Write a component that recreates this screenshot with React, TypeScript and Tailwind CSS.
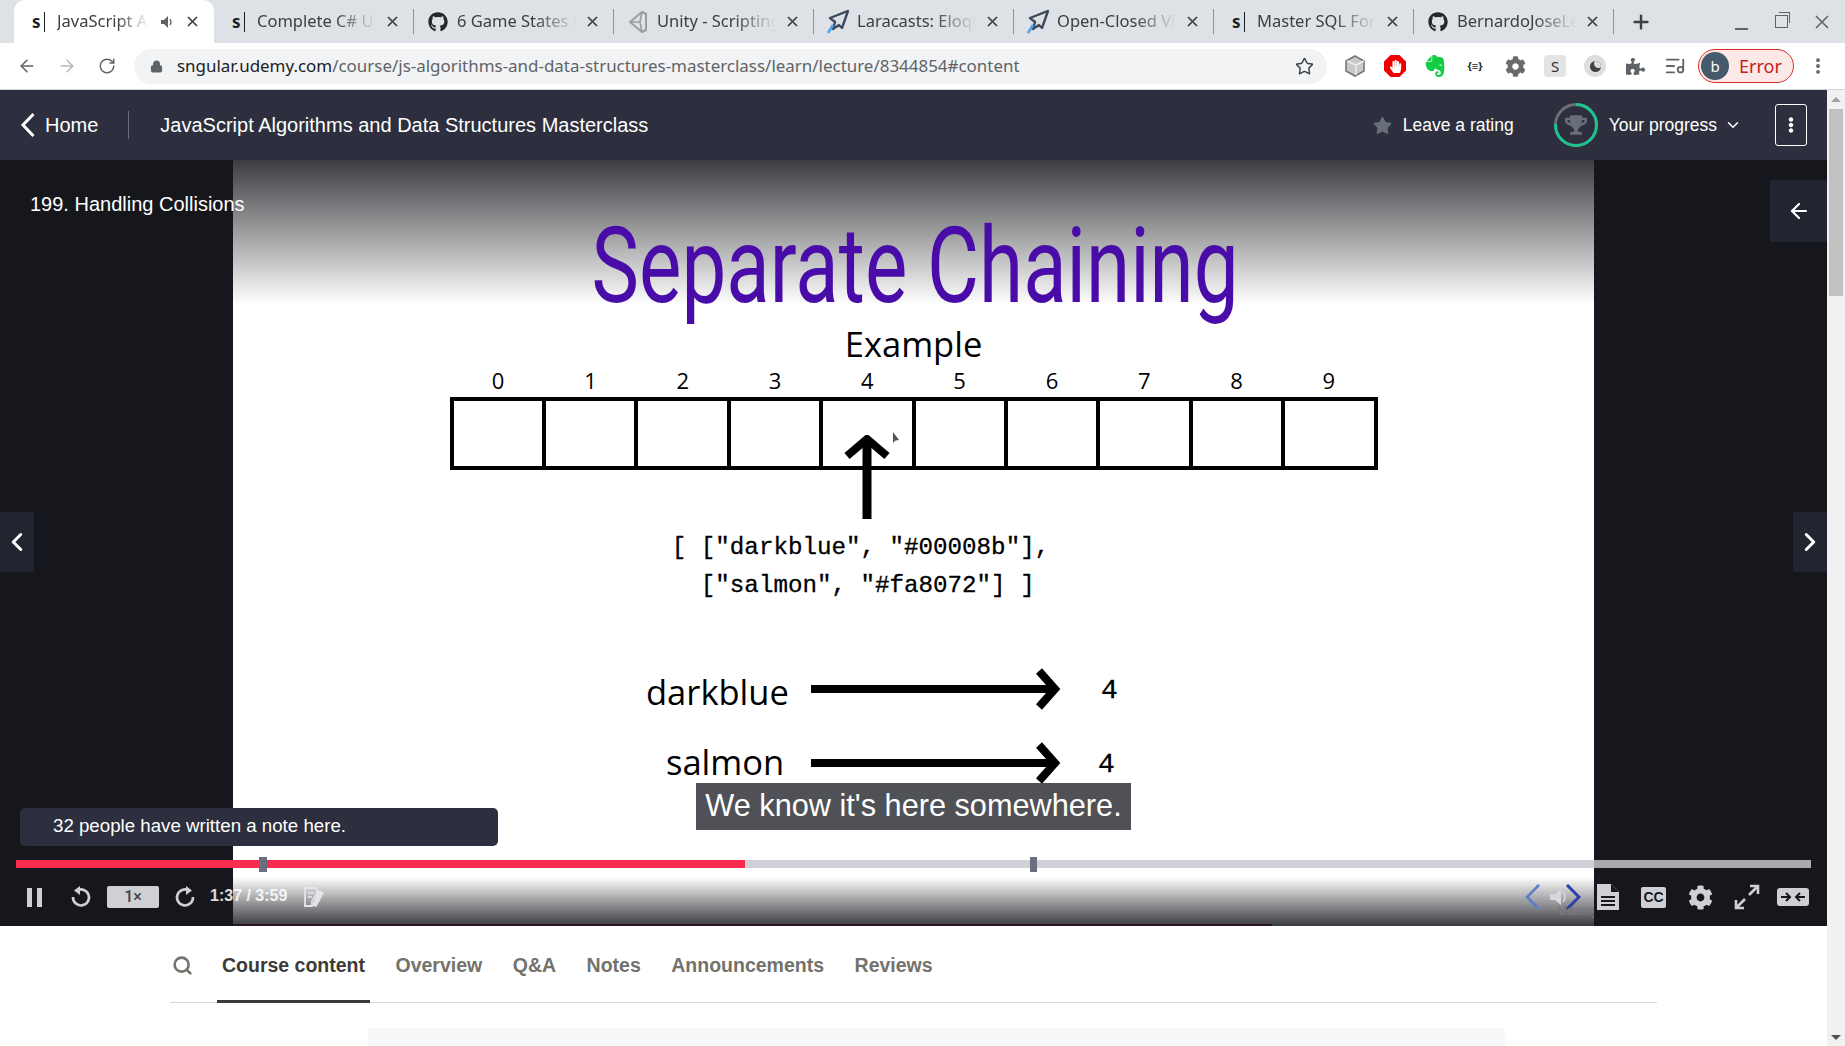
import { ArrowLeft, ArrowRight, ChevronDown, ChevronLeft, ChevronRight, ListMusic, Lock, MoreVertical, Plus, RotateCw, Search, Star } from 'lucide-react';
import { FaCog, FaEllipsisV, FaGithub, FaHandPaper, FaPuzzlePiece, FaStar, FaTrophy } from 'react-icons/fa';
import { SiEvernote } from 'react-icons/si';
import type { ReactNode } from 'react';

const SlashFavicon = () => (
  <span className="ml-[2px] flex items-center gap-[3px] text-[#1c1d1f]">
    <span className="font-bold text-[17px] leading-none font-['Noto_Sans',sans-serif]">s</span>
    <span className="w-px h-[20px] bg-[#1c1d1f]" />
  </span>
);

const PlaneFavicon = () => (
  <svg width="22" height="24" viewBox="0 0 22 24" className="-ml-[3px]">
    <path d="M21 1 L3 8 L8 12 L6 19 L12 15 L15 18 Z" fill="none" stroke="#3c4a5c" strokeWidth="2.4" strokeLinejoin="round" />
    <path d="M6 15 L1 23" stroke="#4aa3e8" strokeWidth="2.6" />
  </svg>
);

const UnityFavicon = () => (
  <svg width="20" height="22" viewBox="0 0 20 22" className="-ml-[2px]">
    <path d="M14 1 L2 11 L14 21 L18 19 V3 Z" fill="none" stroke="#9a9da1" strokeWidth="2" strokeLinejoin="round" />
    <path d="M2 11 H12 L14 1 M12 11 L14 21" fill="none" stroke="#9a9da1" strokeWidth="1.6" />
  </svg>
);

const tabs: { title: string; icon: ReactNode; active?: boolean }[] = [
  { title: 'JavaScript Algorithms', icon: <SlashFavicon />, active: true },
  { title: 'Complete C# Unity', icon: <SlashFavicon /> },
  { title: '6 Game States in', icon: <FaGithub size={20} className="-ml-[2px] text-[#24292e]" /> },
  { title: 'Unity - Scripting API', icon: <UnityFavicon /> },
  { title: 'Laracasts: Eloquent', icon: <PlaneFavicon /> },
  { title: 'Open-Closed Violation', icon: <PlaneFavicon /> },
  { title: 'Master SQL For Data', icon: <SlashFavicon /> },
  { title: 'BernardoJoseLeon', icon: <FaGithub size={20} className="-ml-[2px] text-[#24292e]" /> },
];

const CloseX = () => (
  <svg width="11" height="11" viewBox="0 0 11 11" className="shrink-0">
    <path d="M1 1 L10 10 M10 1 L1 10" stroke="#3c4043" strokeWidth="1.7" />
  </svg>
);

function TabStrip() {
  return (
    <div className="h-[43px] bg-[#dee1e6] flex items-end pl-[14px] font-['Noto_Sans',sans-serif] text-[#3c4043]">
      {tabs.map((t, i) => (
        <div
          key={i}
          className={`w-[200px] h-[43px] flex items-center pl-[16px] ${t.active ? 'bg-white rounded-t-[11px]' : ''}`}
        >
          <span className="w-[22px] flex items-center shrink-0">{t.icon}</span>
          <span
            className={`ml-[5px] text-[16.5px] whitespace-nowrap overflow-hidden [mask-image:linear-gradient(to_right,black_65%,transparent)] ${
              t.active ? 'w-[92px]' : 'w-[120px]'
            }`}
          >
            {t.title}
          </span>
          {t.active && (
            <svg width="14" height="12" viewBox="0 0 14 12" className="ml-[12px] mr-[10px] shrink-0">
              <path d="M0 4 H3 L7 0 V12 L3 8 H0 Z" fill="#5f6368" />
              <path d="M9 3 Q11 6 9 9" stroke="#5f6368" strokeWidth="1.3" fill="none" />
            </svg>
          )}
          <span className={`${t.active ? 'ml-[2px]' : 'ml-[11px]'} mr-[15px]`}>
            <CloseX />
          </span>
          {!t.active && i < 8 && <span className="w-px h-[25px] bg-[#8f9296] shrink-0" />}
        </div>
      ))}
      <div className="h-[43px] flex items-center flex-1">
        <Plus size={22} strokeWidth={2.6} className="ml-[16px] text-[#3c4043]" />
        <div className="ml-auto flex items-center mr-[16px] gap-[27px] text-[#5f6368]">
          <span className="w-[13px] h-[2px] bg-[#5f6368] mt-[14px]" />
          <span className="relative w-[13px] h-[13px] border-[1.5px] border-[#5f6368]">
            <span className="absolute -top-[4px] left-[3px] w-[11px] h-[11px] border-t-[1.5px] border-r-[1.5px] border-[#5f6368]" />
          </span>
          <svg width="14" height="14" viewBox="0 0 14 14">
            <path d="M1 1 L13 13 M13 1 L1 13" stroke="#5f6368" strokeWidth="1.6" />
          </svg>
        </div>
      </div>
    </div>
  );
}

const Ext = ({ children }: { children: ReactNode }) => (
  <span className="w-[40px] flex items-center justify-center">{children}</span>
);

function Toolbar() {
  return (
    <div className="h-[47px] bg-white flex items-center font-['Noto_Sans',sans-serif] border-b border-[#d3d4d8] shrink-0">
      <ArrowLeft size={20} strokeWidth={1.8} className="ml-[17px] text-[#5f6368]" />
      <ArrowRight size={20} strokeWidth={1.8} className="ml-[20px] text-[#b6b8bb]" />
      <RotateCw size={18} strokeWidth={1.9} className="ml-[21px] text-[#5f6368]" />
      <div className="ml-[18px] w-[1193px] h-[35px] rounded-full bg-[#f1f3f4] flex items-center pl-[16px] pr-[13px]">
        <Lock size={13} strokeWidth={2.6} className="text-[#5f6368] fill-[#5f6368]" />
        <span className="ml-[14px] text-[16.95px] text-[#5f6368] whitespace-nowrap">
          <span className="text-[#202124]">sngular.udemy.com</span>/course/js-algorithms-and-data-structures-masterclass/learn/lecture/8344854#content
        </span>
        <Star size={19} strokeWidth={1.8} className="ml-auto text-[#3c4043]" />
      </div>
      {/* extensions */}
      <div className="ml-[8px] flex items-center">
        <Ext>
          <svg width="24" height="24" viewBox="0 0 24 24">
            <path d="M12 2 L21 7 V17 L12 22 L3 17 V7 Z" fill="#c9c9c9" stroke="#777" strokeWidth="1.6" />
            <path d="M4 7 L13 11 V21 M13 11 L21 7" stroke="#eee" strokeWidth="1.4" fill="none" />
          </svg>
        </Ext>
        <Ext>
          <span className="w-[22px] h-[22px] bg-[#ef0000] flex items-center justify-center [clip-path:polygon(30%_0,70%_0,100%_30%,100%_70%,70%_100%,30%_100%,0_70%,0_30%)]">
            <FaHandPaper size={13} className="text-white" />
          </span>
        </Ext>
        <Ext>
          <SiEvernote size={22} className="text-[#14cc45]" />
        </Ext>
        <Ext>
          <span className="text-[11px] font-bold text-[#222]">{'{≡}'}</span>
        </Ext>
        <Ext>
          <FaCog size={21} className="text-[#6a6a6a]" />
        </Ext>
        <Ext>
          <span className="w-[22px] h-[22px] rounded-[4px] bg-[#e4e4e4] flex items-center justify-center text-[15px] text-[#333]">S</span>
        </Ext>
        <Ext>
          <span className="w-[22px] h-[22px] rounded-full bg-[#dedede] flex items-center justify-center">
            <span className="w-[11px] h-[11px] rounded-full bg-[#444] relative overflow-hidden">
              <span className="absolute -top-[2px] left-[4px] w-[9px] h-[9px] rounded-full bg-[#dedede]" />
            </span>
          </span>
        </Ext>
        <Ext>
          <FaPuzzlePiece size={19} className="text-[#5f6368]" />
        </Ext>
        <Ext>
          <ListMusic size={22} strokeWidth={2} className="text-[#5f6368]" />
        </Ext>
      </div>
      <div className="ml-[3px] w-[96px] h-[34px] rounded-full border border-[#d93025] bg-[#fce8e6] flex items-center pl-[2px]">
        <span className="w-[28px] h-[28px] rounded-full bg-[#455a6b] text-white text-[15px] flex items-center justify-center">b</span>
        <span className="ml-[10px] text-[18px] text-[#c5221f]">Error</span>
      </div>
      <MoreVertical size={20} strokeWidth={2.6} className="ml-[14px] text-[#5f6368]" />
    </div>
  );
}

function Header() {
  return (
    <div className="h-[70px] bg-[#2d2f3e] flex items-center text-white font-['Liberation_Sans',sans-serif] shrink-0">
      <svg width="16" height="26" viewBox="0 0 16 26" className="ml-[20px]">
        <path d="M13.5 2 L3 13 L13.5 24" fill="none" stroke="white" strokeWidth="3" />
      </svg>
      <span className="ml-[9px] text-[20px]">Home</span>
      <span className="ml-[30px] w-px h-[28px] bg-[#6a6f7f]" />
      <span className="ml-[31px] text-[20px]">JavaScript Algorithms and Data Structures Masterclass</span>
      <FaStar size={19} className="ml-auto text-[#686f7a]" />
      <span className="ml-[11px] text-[17.5px]">Leave a rating</span>
      <span className="ml-[40px] relative w-[44px] h-[44px] flex items-center justify-center">
        <svg width="44" height="44" viewBox="0 0 44 44" className="absolute inset-0 -rotate-90">
          <circle cx="22" cy="22" r="20.5" fill="none" stroke="#686f7a" strokeWidth="3" />
          <circle cx="22" cy="22" r="20.5" fill="none" stroke="#1ec28b" strokeWidth="3" strokeDasharray="97 132" />
        </svg>
        <FaTrophy size={22} className="text-[#686f7a]" />
      </span>
      <span className="ml-[11px] text-[17.5px]">Your progress</span>
      <ChevronDown size={18} strokeWidth={2} className="ml-[7px]" />
      <span className="ml-[33px] mr-[20px] w-[32px] h-[42px] rounded-[3px] border border-white flex items-center justify-center">
        <FaEllipsisV size={16} />
      </span>
    </div>
  );
}

const Arrow = () => (
  <svg width="252" height="42" viewBox="0 0 252 42" className="shrink-0">
    <path d="M0 21 H244" stroke="black" strokeWidth="8" />
    <path d="M228 3 L244 21 L228 39" fill="none" stroke="black" strokeWidth="8" />
  </svg>
);

function Slide() {
  return (
    <div className="relative w-[1361px] h-full bg-white flex flex-col items-center overflow-hidden text-black font-['Open_Sans',sans-serif]">
      <div className="h-[170px] flex items-end relative z-10">
        <h1 className="text-[106px] leading-[128px] font-normal text-[#4a0ca8] whitespace-nowrap scale-x-[0.754] translate-x-[2px] font-['Roboto',sans-serif]">
          Separate Chaining
        </h1>
      </div>
      <div className="h-[40px] leading-[28px] text-[34.5px]">Example</div>
      <div className="w-[923px] h-[27px] flex text-[22px] leading-[20px]">
        {[0, 1, 2, 3, 4, 5, 6, 7, 8, 9].map((n) => (
          <span key={n} className="flex-1 text-center">{n}</span>
        ))}
      </div>
      <div className="w-[928px] h-[73px] border-4 border-black flex shrink-0">
        {[0, 1, 2, 3, 4, 5, 6, 7, 8, 9].map((n) => (
          <div key={n} className={`flex-1 relative ${n > 0 ? 'border-l-4 border-black' : ''}`}>
            {n === 4 && (
              <svg width="8" height="14" viewBox="0 0 8 14" className="absolute left-[69px] top-[30px]">
                <path d="M1 1 V12 L3.5 9.5 L7 9 Z" fill="#555" />
              </svg>
            )}
          </div>
        ))}
      </div>
      <svg width="46" height="84" viewBox="0 0 46 84" className="-mt-[35px] mr-[94px] shrink-0">
        <path d="M23 84 V4" stroke="black" strokeWidth="9" />
        <path d="M3 21 L23 4 L43 21" fill="none" stroke="black" strokeWidth="8" />
      </svg>
      <pre className="mt-[10px] mr-[106px] text-[24.2px] leading-[38px] font-['Liberation_Mono',monospace] [-webkit-text-stroke:0.3px_black]">
        {'[ ["darkblue", "#00008b"],\n  ["salmon", "#fa8072"] ]'}
      </pre>
      <div className="self-start ml-[413px] mt-[47px] flex items-center h-[74px] w-[520px]">
        <span className="w-[165px] text-[34.5px] pt-[6px]">darkblue</span>
        <Arrow />
        <span className="ml-[38px] text-[28px] font-['Liberation_Mono',monospace] [-webkit-text-stroke:0.3px_black] pt-[3px]">4</span>
      </div>
      <div className="self-start ml-[414px] flex items-center h-[74px] w-[520px]">
        <span className="w-[164px] pl-[19px] text-[34.5px] pb-[2px]">salmon</span>
        <Arrow />
        <span className="ml-[35px] text-[28px] font-['Liberation_Mono',monospace] [-webkit-text-stroke:0.3px_black] pt-[3px]">4</span>
      </div>

      {/* player fades */}
      <div className="absolute top-0 inset-x-0 h-[145px] bg-linear-to-b from-[#3c3d41] to-[#3c3d4100]" />
      <div className="absolute bottom-0 inset-x-0 h-[49px] bg-linear-to-b from-[#3a3b4000] to-[#3a3b40]" />
      <div className="absolute bottom-0 left-0 w-[1039px] h-[2px] bg-[#2b1521]" />

      {/* slide's own nav, burned into the video */}
      <svg width="16" height="26" viewBox="0 0 16 26" className="absolute left-[1292px] top-[724px]">
        <path d="M14 1 L2 13 L14 25" fill="none" stroke="#5b7fc7" strokeWidth="2.6" />
      </svg>
      <svg width="16" height="26" viewBox="0 0 16 26" className="absolute left-[1332px] top-[724px]">
        <path d="M2 1 L14 13 L2 25" fill="none" stroke="#2a3fa8" strokeWidth="3" />
      </svg>
      <svg width="20" height="18" viewBox="0 0 20 18" className="absolute left-[1317px] top-[728px]">
        <path d="M0 6 H5 L11 1 V17 L5 12 H0 Z" fill="#d8d8dc" />
        <path d="M13 4 Q17 9 13 14" stroke="#d8d8dc" strokeWidth="1.6" fill="none" />
      </svg>
      <span className="absolute left-[1325px] top-[745px] text-[12px] font-bold leading-none text-[#77787d] font-['Liberation_Sans',sans-serif]">Udemy</span>
    </div>
  );
}

function Video() {
  return (
    <div className="relative h-[766px] bg-[#16171c] flex justify-center shrink-0 font-['Liberation_Sans',sans-serif]">
      <Slide />

      <div className="absolute left-[30px] top-[32px] text-[20px] leading-[24px] text-white">199. Handling Collisions</div>

      <button className="absolute right-0 top-[20px] w-[57px] h-[62px] bg-[#22252f] flex items-center justify-center text-white">
        <ArrowLeft size={24} strokeWidth={2.2} />
      </button>
      <button className="absolute left-0 top-[352px] w-[34px] h-[60px] bg-[#22252f] flex items-center justify-center text-white">
        <ChevronLeft size={30} strokeWidth={2.4} />
      </button>
      <button className="absolute right-0 top-[352px] w-[34px] h-[60px] bg-[#22252f] flex items-center justify-center text-white">
        <ChevronRight size={30} strokeWidth={2.4} />
      </button>

      <div className="absolute left-[20px] top-[648px] w-[478px] h-[38px] rounded-[5px] bg-[#2d2f3e] text-white text-[18.7px] leading-[36px] pl-[33px]">
        32 people have written a note here.
      </div>

      <div className="absolute left-[696px] top-[623px] w-[435px] h-[47px] bg-[#505156] text-white text-[30.7px] leading-[46px] text-center whitespace-nowrap">
        We know it's here somewhere.
      </div>

      {/* progress */}
      <div className="absolute left-[16px] top-[700px] w-[1795px] h-[8px] flex">
        <div className="w-[729px] bg-[#f82c4f]" />
        <div className="w-[849px] bg-[#d0d1d6]" />
        <div className="flex-1 bg-[#a9aab0]" />
      </div>
      <div className="absolute left-[259px] top-[697px] w-[8px] h-[15px] bg-[#6a6f7f]" />
      <div className="absolute left-[1030px] top-[697px] w-[7px] h-[15px] bg-[#6a6f7f]" />

      {/* controls */}
      <div className="absolute left-0 right-0 top-[724px] h-[26px] flex items-center text-[#cfd0d5]">
        <span className="ml-[27px] flex gap-[5px]">
          <span className="w-[5px] h-[19px] bg-[#cfd0d5]" />
          <span className="w-[5px] h-[19px] bg-[#cfd0d5]" />
        </span>
        <svg width="22" height="22" viewBox="0 0 22 22" className="ml-[28px]">
          <path d="M7 4.5 A8 8 0 1 1 3 11" fill="none" stroke="#cfd0d5" strokeWidth="2.6" />
          <path d="M4 4.5 L10 0 V9 Z" fill="#cfd0d5" />
        </svg>
        <span className="ml-[15px] w-[52px] h-[22px] rounded-[2px] bg-[#cfd0d5] text-[#3e4143] text-[16px] font-medium flex items-center justify-center font-['Roboto',sans-serif]">1×</span>
        <svg width="22" height="22" viewBox="0 0 22 22" className="ml-[15px]">
          <path d="M15 4.5 A8 8 0 1 0 19 11" fill="none" stroke="#cfd0d5" strokeWidth="2.6" />
          <path d="M18 4.5 L12 0 V9 Z" fill="#cfd0d5" />
        </svg>
        <span className="ml-[14px] text-[16px] font-bold text-white/85 -mt-[3px]">1:37 / 3:59</span>
        <svg width="20" height="20" viewBox="0 0 20 20" className="ml-[17px]">
          <path d="M1 1 H13 V6 L8 14 V19 H1 Z" fill="none" stroke="#e4e5e8" strokeWidth="1.8" />
          <path d="M4 6 H10 M4 10 H8 M15 4 L19 6 L12 19 L9 18 Z" stroke="#e4e5e8" strokeWidth="1.6" fill="#e4e5e8" />
        </svg>

        <svg width="22" height="26" viewBox="0 0 22 26" className="ml-auto">
          <path d="M0 0 H14 L22 8 V26 H0 Z" fill="#cfd0d5" />
          <path d="M14 0 V8 H22" fill="#16171c" />
          <path d="M4 13 H18 M4 17 H18 M4 21 H18" stroke="#16171c" strokeWidth="2" />
        </svg>
        <span className="ml-[22px] w-[25px] h-[21px] rounded-[2px] bg-[#cfd0d5] text-[#16171c] text-[14px] font-bold leading-[21px] text-center">CC</span>
        <FaCog size={25} className="ml-[22px]" />
        <svg width="26" height="26" viewBox="0 0 26 26" className="ml-[21px]">
          <path d="M15 11 L23 3 M16 2 H24 V10 M11 15 L3 23 M2 16 V24 H10" fill="none" stroke="#cfd0d5" strokeWidth="2.6" />
        </svg>
        <span className="ml-[17px] mr-[18px] w-[32px] h-[18px] rounded-[3px] bg-[#cfd0d5] flex items-center justify-center">
          <svg width="26" height="12" viewBox="0 0 26 12">
            <path d="M1 6 H10 M6 2 L10 6 L6 10 M25 6 H16 M20 2 L16 6 L20 10" fill="none" stroke="#16171c" strokeWidth="2" />
          </svg>
        </span>
      </div>
    </div>
  );
}

const tabLabels = ['Overview', 'Q&A', 'Notes', 'Announcements', 'Reviews'];

function CourseTabs() {
  return (
    <div className="flex-1 bg-white font-['Liberation_Sans',sans-serif] overflow-hidden">
      <div className="mx-[170px] h-[77px] flex border-b-[1.5px] border-[#dcdacb]">
        <Search size={21} strokeWidth={3} className="ml-[2px] mt-[29px] text-[#73726c]" />
        <div className="ml-[24px] h-[77px] px-[5px] border-b-[3px] border-[#3c3b37] text-[19.5px] font-bold text-[#3c3b37] leading-[78px]">Course content</div>
        {tabLabels.map((l) => (
          <div key={l} className="ml-[20.5px] px-[5px] text-[19.5px] font-bold text-[#73726c] leading-[78px]">{l}</div>
        ))}
      </div>
      <div className="ml-[368px] w-[1137px] mt-[25px] h-[60px] bg-[#f7f8fa]" />
    </div>
  );
}

function Scrollbar() {
  return (
    <div className="w-[18px] bg-[#f1f1f1] flex flex-col items-center shrink-0">
      <span className="mt-[7px] border-x-[5px] border-x-transparent border-b-[5px] border-b-[#a3a3a3]" />
      <div className="mt-[7px] w-[14px] h-[187px] bg-[#c1c1c1]" />
      <span className="mt-auto mb-[6px] border-x-[5px] border-x-transparent border-t-[5px] border-t-[#505050]" />
    </div>
  );
}

export default function App() {
  return (
    <div className="w-[1845px] h-[1046px] overflow-hidden flex flex-col bg-white">
      <TabStrip />
      <Toolbar />
      <div className="flex-1 flex min-h-0">
        <div className="flex-1 flex flex-col min-w-0">
          <Header />
          <Video />
          <CourseTabs />
        </div>
        <Scrollbar />
      </div>
    </div>
  );
}
